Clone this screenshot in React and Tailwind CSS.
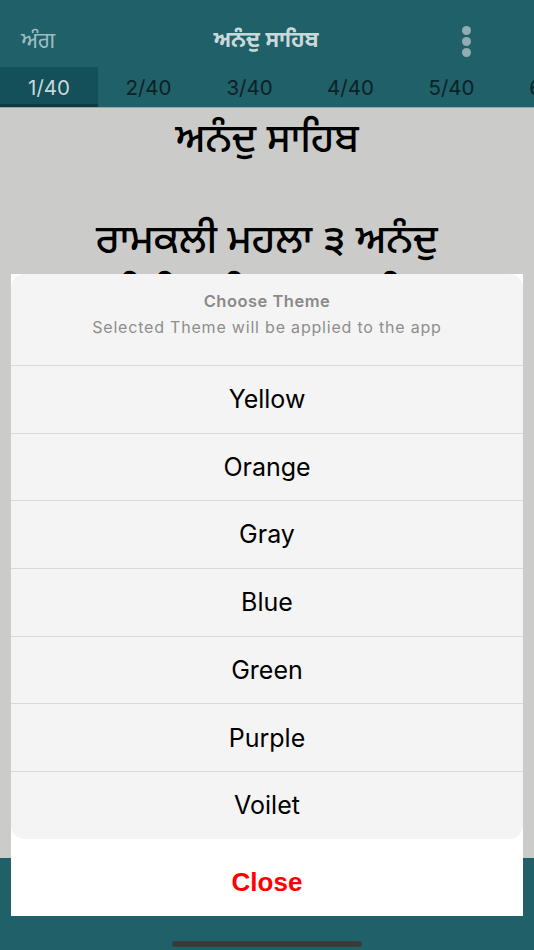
const themes = ["Yellow", "Orange", "Gray", "Blue", "Green", "Purple", "Voilet"];
const tabs = ["1/40", "2/40", "3/40", "4/40", "5/40", "6/40"];
const ui = "font-['Inter','Liberation_Sans',sans-serif]";
const pa = "font-['Noto_Sans_Gurmukhi','Lohit_Gurmukhi','Noto_Sans','Liberation_Sans',sans-serif]";

export default function App() {
  return (
    <div className={`relative w-[534px] h-[950px] overflow-hidden flex flex-col bg-[#1f6069] ${ui}`}>
      <header className="h-[67px] flex items-start shrink-0">
        <span className={`ml-[21px] w-[34px] mt-[28px] text-[23px] leading-[28px] whitespace-nowrap text-[#9dbcc0] ${pa}`}>ਅੰਗ</span>
        <span className={`ml-[158px] w-[106px] mt-[28px] flex justify-center text-[21.5px] leading-[28px] font-bold text-[#c9d9da] whitespace-nowrap ${pa}`}>ਅਨੰਦੁ ਸਾਹਿਬ</span>
        <div className="ml-[143px] mt-[26px] flex flex-col gap-[2px]">
          <span className="w-[9px] h-[9px] rounded-full bg-[#92adb1]" />
          <span className="w-[9px] h-[9px] rounded-full bg-[#92adb1]" />
          <span className="w-[9px] h-[9px] rounded-full bg-[#92adb1]" />
        </div>
      </header>
      <nav className="h-[41px] flex shrink-0 overflow-hidden border-b border-[#8fa9a9]">
        {tabs.map((t, i) => (
          <div
            key={t}
            className={
              i === 0
                ? "w-[98px] shrink-0 text-center text-[20.5px] leading-[41px] text-[#c9d9da] bg-[#145059] border-b-[3px] border-[#0f3a42]"
                : "w-[101px] shrink-0 text-center text-[20.5px] leading-[41px] text-[#0b2226]"
            }
          >
            {t}
          </div>
        ))}
      </nav>
      <main className={`h-[750px] shrink-0 bg-[#cbcbca] flex flex-col items-center text-black ${pa}`}>
        <p className="mt-[8px] text-[39.5px] leading-[54px] font-medium whitespace-nowrap">ਅਨੰਦੁ ਸਾਹਿਬ</p>
        <p className="mt-[46px] text-[40px] leading-[54px] font-medium whitespace-nowrap">ਰਾਮਕਲੀ ਮਹਲਾ ੩ ਅਨੰਦੁ</p>
        <p className="text-[40px] leading-[54px] font-medium whitespace-nowrap">ਸਿਰਿ ਸਤਿਗੁਰ ਪ੍ਰਸਾਦਿ</p>
      </main>
      <div className="flex-1" />
      <div className="absolute left-[11px] top-[274px] w-[512px] h-[642px] bg-white flex flex-col">
        <section className="rounded-[14px] bg-[#f4f4f4] flex flex-col overflow-hidden">
          <div className="h-[91px] flex flex-col items-center shrink-0">
            <p className="mt-[17px] text-[16.5px] leading-[20px] font-semibold text-[#8a8a8a] tracking-[0.5px]">Choose Theme</p>
            <p className="mt-[6px] text-[16px] leading-[20px] text-[#8e8e8e] tracking-[0.8px]">Selected Theme will be applied to the app</p>
          </div>
          {themes.map((t) => (
            <div key={t} className="h-[67.7px] border-t border-[#d9d9d9] pt-[1px] flex items-center justify-center text-[25px] text-black">
              {t}
            </div>
          ))}
        </section>
        <div className="flex-1 flex items-center justify-center pt-[10px] text-[26px] font-bold text-[#ff0000] font-['Liberation_Sans',sans-serif]">Close</div>
      </div>
      <div className="absolute left-[172px] top-[941px] w-[190px] h-[6px] rounded-full bg-[#3a3a3a]" />
    </div>
  );
}
